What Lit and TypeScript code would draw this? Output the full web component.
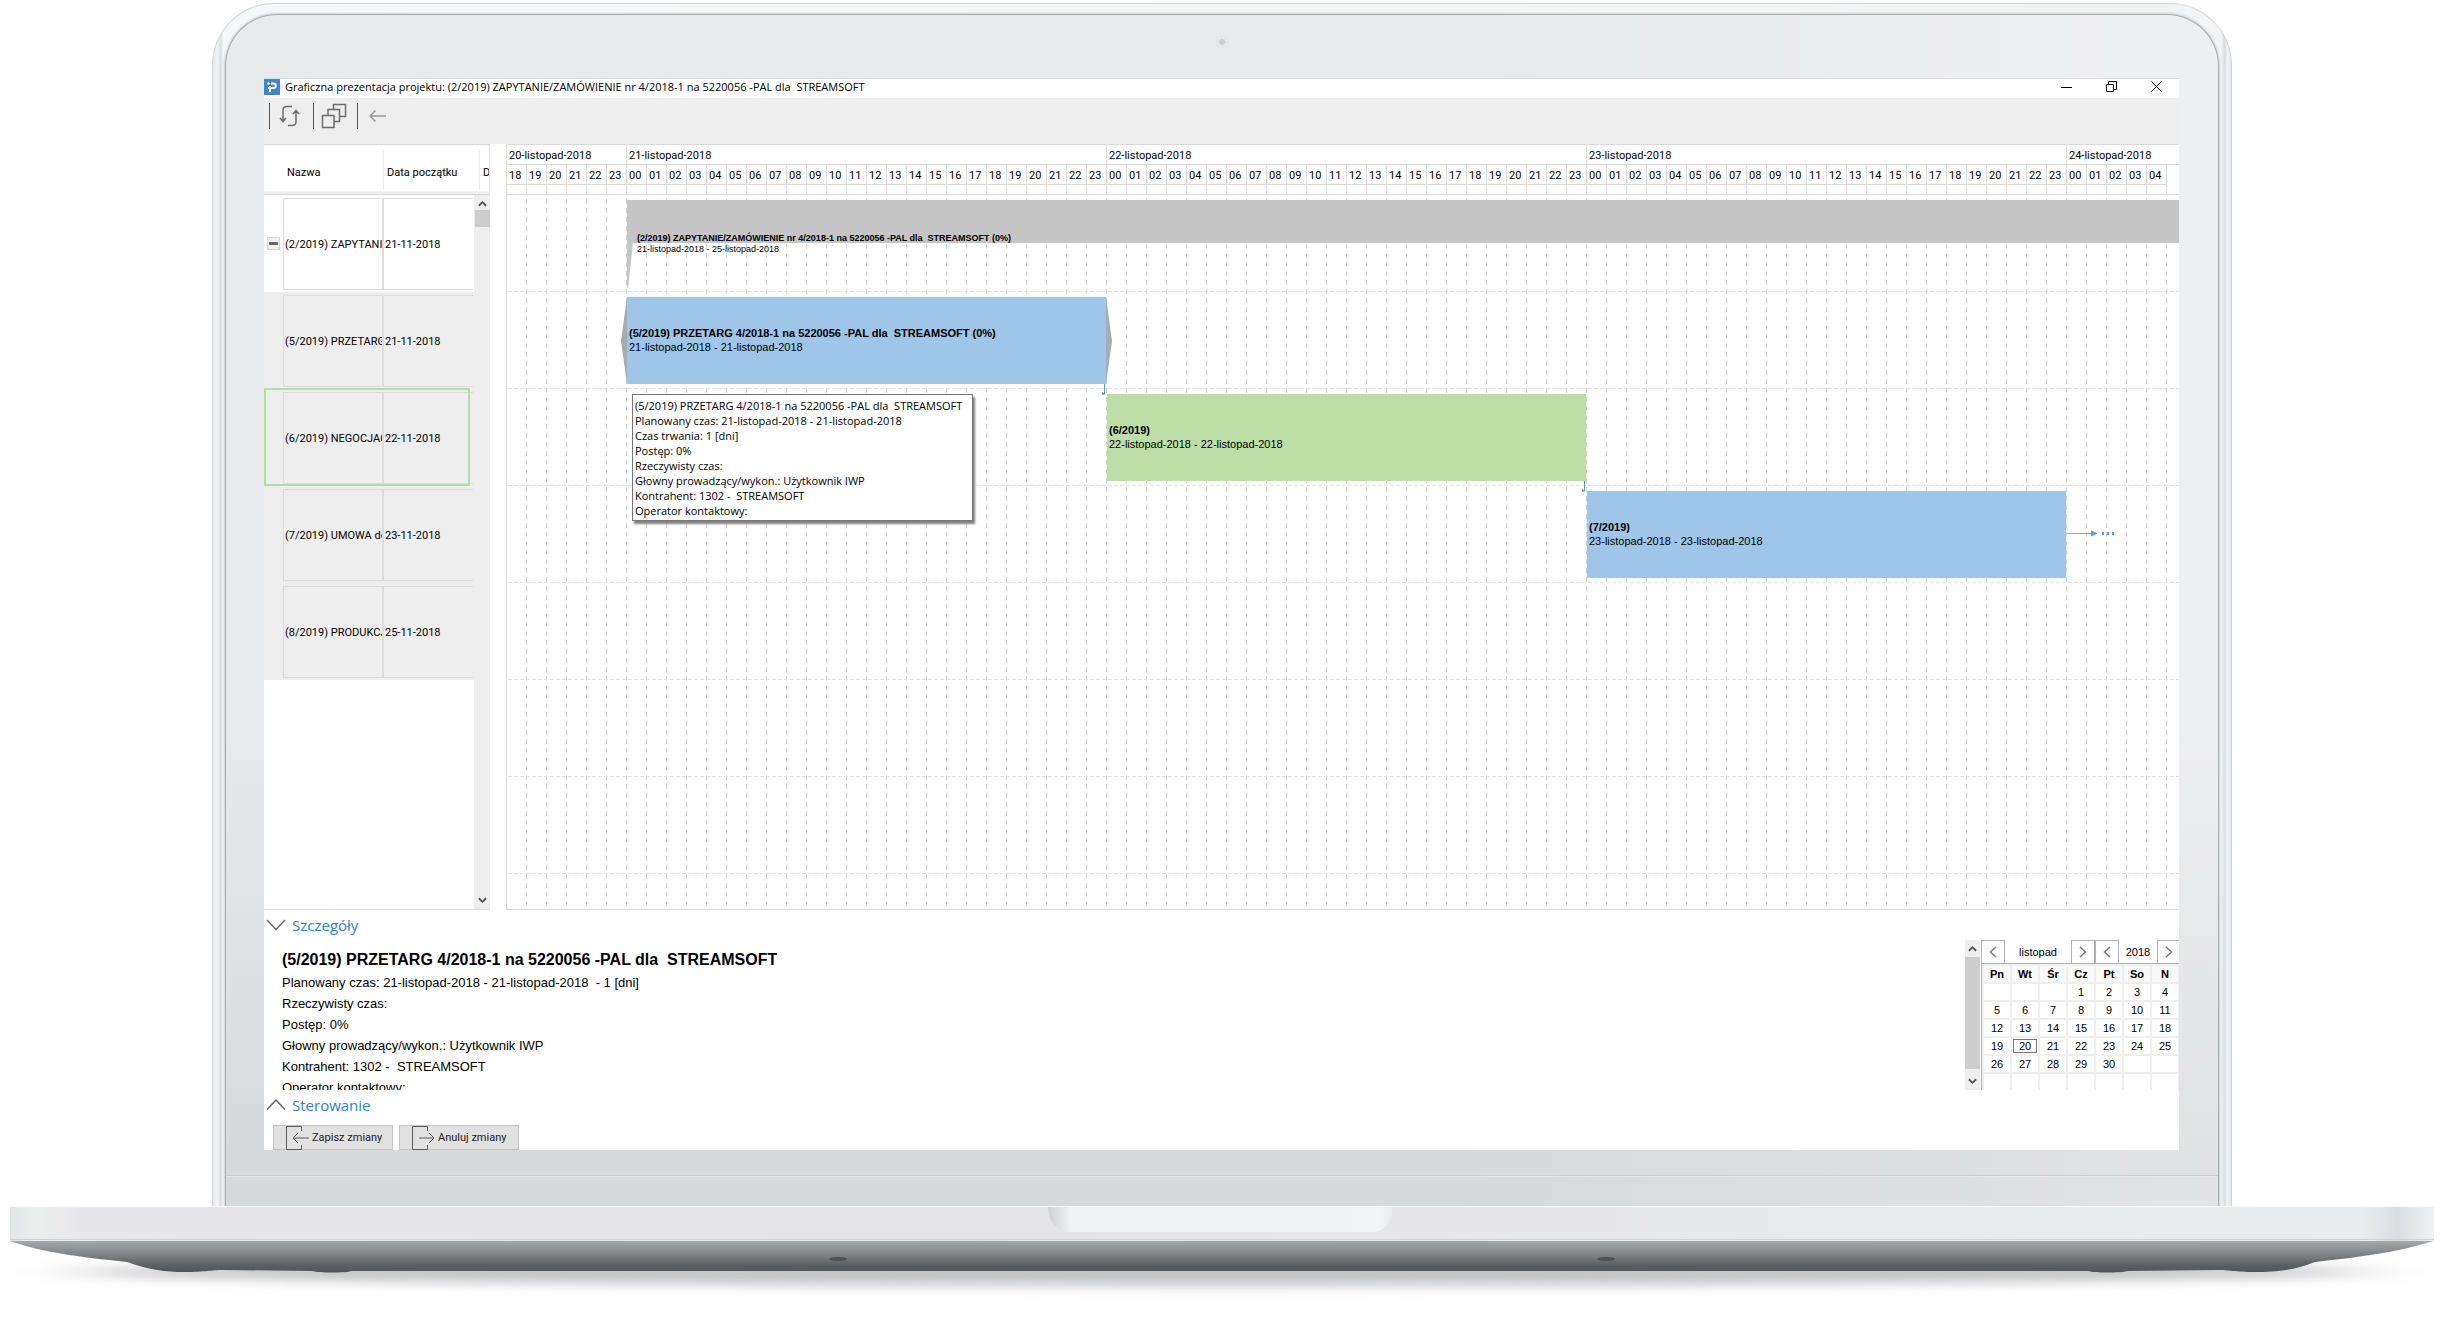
import { LitElement, html, css, svg } from "lit";
import { customElement } from "lit/decorators.js";
import { classMap } from "lit/directives/class-map.js";
import { styleMap } from "lit/directives/style-map.js";

const HOUR = 20;

const chevron = (d: string, size = 10) => html`<svg class="ico" width=${size} height=${size} viewBox="0 0 10 10" aria-hidden="true">
  <path d=${d} fill="none" stroke="currentColor" stroke-width="2" /></svg>`;
const UP = "M1 7.5 L5 3.5 L9 7.5";
const DOWN = "M1 2.5 L5 6.5 L9 2.5";

interface Task {
  id: string;
  name: string;
  date: string;
  kind: "root" | "child" | "selected";
}

const TASKS: Task[] = [
  { id: "2", name: "(2/2019) ZAPYTANIE", date: "21-11-2018", kind: "root" },
  { id: "5", name: "(5/2019) PRZETARG", date: "21-11-2018", kind: "child" },
  { id: "6", name: "(6/2019) NEGOCJAC", date: "22-11-2018", kind: "selected" },
  { id: "7", name: "(7/2019) UMOWA do", date: "23-11-2018", kind: "child" },
  { id: "8", name: "(8/2019) PRODUKCJ", date: "25-11-2018", kind: "child" },
];

@customElement("task-list")
export class TaskList extends LitElement {
  static styles = css`
    :host { display: block; position: relative; background: #fff; border-bottom: 1px solid #d9d9d9; font-family: Roboto, sans-serif; }
    table { width: 100%; border-collapse: collapse; table-layout: fixed; }
    .c0 { width: 19px; }
    .c1 { width: 100px; }
    .c2 { width: 96px; }
    th, td { padding: 0; font-weight: 400; text-align: left; overflow: hidden; }
    .head th { height: 50px; box-sizing: border-box; border-top: 1px solid #d9d9d9; border-bottom: 1px solid #d9d9d9;
      background: linear-gradient(#fff 46px, #eee 46px); }
    .label { display: block; padding: 8px 0 0 3px; height: 38px; line-height: 28px; border-left: 1px solid #e8e8e8; box-sizing: border-box; overflow: hidden; white-space: nowrap; }
    .label.first { border-color: transparent; padding-left: 3px; }
    .row td { height: 97px; }
    .row.shade td { background: #eeeeef; }
    .cell { height: 90px; line-height: 92px; margin: 3px 0 2px; border: 1px solid #dcdcdc; padding-left: 1px; overflow: hidden; box-sizing: content-box; white-space: nowrap; }
    .cell.last { margin-right: 17px; border-right: 0; }
    .fold { display: block; width: 13px; height: 13px; padding: 0; margin-left: 3px; border: 1px solid #d5d5d5; background: #f0f0f0; }
    .fold i { display: block; height: 3px; margin: 0 1px; background: #666; }
    .mark { position: absolute; left: 0; right: 20px; top: 244px; height: 94px; border: 2px solid #b7dc9f; }
    .scroll { position: absolute; top: 51px; right: 0; bottom: 0; width: 16px; background: #eee; color: #505050;
      display: flex; flex-direction: column; align-items: center; padding: 4px 0; box-sizing: border-box; }
    .thumb { width: 15px; height: 17px; background: #cdcdcd; margin: 2px 0 auto; }
    .edge { position: absolute; right: 0; top: 1px; width: 1px; height: 48px; background: #d9d9d9; }
  `;
  render() {
    return html`
      <table>
        <colgroup><col class="c0" /><col class="c1" /><col class="c2" /><col /></colgroup>
        <thead><tr class="head">
          <th></th>
          <th><span class="label first">Nazwa</span></th>
          <th><span class="label">Data początku</span></th>
          <th><span class="label">D</span></th>
        </tr></thead>
        <tbody>
          ${TASKS.map((t) => html`<tr class=${classMap({ row: true, shade: t.kind !== "root" })}>
            <td>${t.kind === "root" ? html`<button class="fold" aria-label="Zwiń"><i></i></button>` : ""}</td>
            <td><div class="cell">${t.name}</div></td>
            <td colspan="2"><div class="cell last">${t.date}</div></td>
          </tr>`)}
        </tbody>
      </table>
      <div class="edge"></div>
      <div class="mark"></div>
      <div class="scroll">${chevron(UP, 9)}<div class="thumb"></div>${chevron(DOWN, 9)}</div>
    `;
  }
}

interface Bar {
  start: number;
  hours: number;
  kind: string;
  title: string;
  range: string;
}

const BARS: Bar[] = [
  { start: 6, hours: 80, kind: "summary", title: "(2/2019) ZAPYTANIE/ZAMÓWIENIE nr 4/2018-1 na 5220056 -PAL dla  STREAMSOFT (0%)", range: "21-listopad-2018 - 25-listopad-2018" },
  { start: 6, hours: 24, kind: "blue open", title: "(5/2019) PRZETARG 4/2018-1 na 5220056 -PAL dla  STREAMSOFT (0%)", range: "21-listopad-2018 - 21-listopad-2018" },
  { start: 30, hours: 24, kind: "green", title: "(6/2019)", range: "22-listopad-2018 - 22-listopad-2018" },
  { start: 54, hours: 24, kind: "blue", title: "(7/2019)", range: "23-listopad-2018 - 23-listopad-2018" },
];

const DAYS = [
  { label: "20-listopad-2018", from: 18, to: 23 },
  { label: "21-listopad-2018", from: 0, to: 23 },
  { label: "22-listopad-2018", from: 0, to: 23 },
  { label: "23-listopad-2018", from: 0, to: 23 },
  { label: "24-listopad-2018", from: 0, to: 4 },
];

@customElement("gantt-chart")
export class GanttChart extends LitElement {
  static styles = css`
    :host { display: block; overflow: hidden; background: #fff; border: solid #d9d9d9; border-width: 1px 0 1px 1px; }
    .scale { display: flex; border-bottom: 1px solid #d9d9d9; font-family: Roboto, sans-serif; }
    .day { flex: none; border-left: 1px solid #d9d9d9; margin-left: -1px; }
    .day:last-child { flex: 1 0 auto; }
    .date { padding-left: 2px; height: 19px; line-height: 21px; border-bottom: 1px solid #d9d9d9; }
    .hours { display: flex; }
    .hour { flex: none; box-sizing: border-box; width: 20px; border-right: 1px solid #d9d9d9; }
    .num { display: block; padding-left: 2px; height: 19px; line-height: 21px; }
    .sub { height: 9px; }
    .line { height: 1px; background: #d9d9d9; }
    .canvas { position: relative; height: 714px; }
    .grid { position: absolute; inset: 0; width: 100%; height: 100%; }
    .row { position: relative; display: flex; height: 97px; padding-top: 5px; box-sizing: border-box; }
    .bar { flex: none; position: relative; box-sizing: border-box; height: 87px; padding: 29px 0 0 2px; line-height: 14px; margin-right: 1px; }
    .name, .range { display: block; white-space: pre; }
    .blue { background: #9fc6e8; }
    .green { background: #bddea7; }
    .summary { height: 43px; padding: 33px 0 0 10px; font-size: 9px; line-height: 11px; background: #c5c5c5; }
    .side { position: absolute; top: 0; width: 6px; height: 87px; }
    .side.l { left: -6px; }
    .side.r { right: -6px; }
    .tail { position: absolute; left: 0; top: 43px; width: 6px; height: 45px; }
    .drop { position: absolute; right: 0; top: 86px; width: 8px; height: 12px; }
    .next { align-self: flex-start; margin-top: 37px; }
    .tip { position: absolute; left: 125px; top: 199px; z-index: 2; box-sizing: border-box; min-width: 341px; padding: 3px 3px 2px 2px;
      background: #fff; border: 1px solid #767676; box-shadow: 2px 3px 2px rgba(0,0,0,.5); font: 11px/15px "Open Sans", "Noto Sans", sans-serif; }
    .tip p { margin: 0; white-space: pre; }
  `;
  render() {
    return html`
      <div class="scale">
        ${DAYS.map((d) => html`<div class="day">
          <div class="date">${d.label}</div>
          <div class="hours">${Array.from({ length: d.to - d.from + 1 }, (_, i) => html`<div class="hour">
            <span class="num">${String(d.from + i).padStart(2, "0")}</span><div class="line"></div><div class="sub"></div></div>`)}</div>
        </div>`)}
      </div>
      <div class="canvas">
        <svg class="grid" aria-hidden="true">
          <defs>
            <pattern id="v" width="20" height="9" patternUnits="userSpaceOnUse"><rect x="19" y="4" width="1" height="5" fill="#d2d2d2" /></pattern>
            <pattern id="h" width="6" height="97" patternUnits="userSpaceOnUse"><rect x="1" y="96" width="4" height="1" fill="#e2e2e2" /></pattern>
          </defs>
          <rect width="100%" height="100%" fill="url(#v)" />
          <rect width="100%" height="100%" fill="url(#h)" />
        </svg>
        ${BARS.map((b, i) => html`<div class="row">
          <div class="bar ${b.kind}" style=${styleMap({ marginLeft: `${b.start * HOUR}px`, width: `${b.hours * HOUR - 1}px` })}>
            <b class="name">${b.title}</b><span class="range">${b.range}</span>
            ${b.kind === "summary" ? html`<svg class="tail" viewBox="0 0 6 45"><path d="M0 0 H6 L1 45 H0 Z" fill="#c5c5c5" /></svg>` : ""}
            ${b.kind === "blue open" ? html`
              <svg class="side l" viewBox="0 0 6 87"><path d="M6 0 L0 44 L6 87 Z" fill="#ababab" /></svg>
              <svg class="side r" viewBox="0 0 6 87"><path d="M0 0 L6 44 L0 87 Z" fill="#ababab" /></svg>` : ""}
            ${i === 1 || i === 2 ? html`<svg class="drop" viewBox="0 0 8 12"><path d="M6.5 1 V11" stroke="#5d93c8" fill="none" /><path d="M4 9 L7.500 11 L4 12 Z" fill="#5d93c8" /></svg>` : ""}
          </div>
          ${i === 3 ? html`<svg class="next" width="50" height="10" viewBox="0 0 50 10"><path d="M0 5.500 H28" stroke="#7fa9cf" /><path d="M24 2.500 L31 5.500 L24 8.500 Z" fill="#6b9bc8" />
            ${[35, 40, 45].map((x) => svg`<rect x=${x} y="4" width="2" height="3" fill="#6b9bc8" />`)}</svg>` : ""}
        </div>`)}
        <div class="tip" role="tooltip">
          <p>(5/2019) PRZETARG 4/2018-1 na 5220056 -PAL dla  STREAMSOFT</p>
          <p>Planowany czas: 21-listopad-2018 - 21-listopad-2018</p>
          <p>Czas trwania: 1 [dni]</p>
          <p>Postęp: 0%</p>
          <p>Rzeczywisty czas:</p>
          <p>Głowny prowadzący/wykon.: Użytkownik IWP</p>
          <p>Kontrahent: 1302 -  STREAMSOFT</p>
          <p>Operator kontaktowy:</p>
        </div>
      </div>
    `;
  }
}

const WEEKDAYS = ["Pn", "Wt", "Śr", "Cz", "Pt", "So", "N"];

@customElement("month-calendar")
export class MonthCalendar extends LitElement {
  static styles = css`
    :host { display: flex; width: 214px; height: 150px; overflow: hidden; }
    .scroll { flex: none; width: 15px; margin-right: 1px; background: #eee; color: #505050; display: flex; flex-direction: column; align-items: center; padding: 4px 0; box-sizing: border-box; }
    .thumb { flex: 1; width: 15px; background: #cdcdcd; margin: 4px 0 8px; }
    .cal { flex: none; width: 200px; border-left: 1px solid #b0b0b0; border-bottom: 1px solid #b0b0b0; box-sizing: border-box; }
    .nav { display: flex; height: 23px; line-height: 24px; text-align: center; border-bottom: 1px solid #b0b0b0; }
    .nav button { flex: none; width: 24px; height: 24px; padding: 0; border: 1px solid #b0b0b0; background: #fff; color: #777; display: grid; place-items: center; }
    .nav button:first-child { border-left: 0; width: 23px; }
    .month { flex: none; width: 66px; }
    .year { flex: none; width: 38px; }
    table { border-collapse: separate; border-spacing: 2px; background: #efefef; width: 198px; table-layout: fixed; }
    th, td { padding: 0; height: 16px; line-height: 16px; text-align: center; background: #fff; }
    th { background: #f9f9f9; font-weight: 700; }
    .today { display: block; margin: 0 1px; height: 14px; line-height: 12px; box-sizing: border-box; border: 1px solid #777; }
  `;
  render() {
    const cells = Array.from({ length: 42 }, (_, i) => (i >= 3 && i < 33 ? i - 2 : 0));
    const prev = html`<svg width="8" height="12" viewBox="0 0 8 12"><path d="M7 1 L1.500 6 L7 11" fill="none" stroke="currentColor" stroke-width="1.500" /></svg>`;
    const next = html`<svg width="8" height="12" viewBox="0 0 8 12"><path d="M1 1 L6.500 6 L1 11" fill="none" stroke="currentColor" stroke-width="1.500" /></svg>`;
    return html`
      <div class="scroll">${chevron(UP, 9)}<div class="thumb"></div>${chevron(DOWN, 9)}</div>
      <div class="cal">
        <div class="nav">
          <button aria-label="Poprzedni miesiąc">${prev}</button>
          <span class="month">listopad</span>
          <button aria-label="Następny miesiąc">${next}</button>
          <button aria-label="Poprzedni rok">${prev}</button>
          <span class="year">2018</span>
          <button aria-label="Następny rok">${next}</button>
        </div>
        <table>
          <thead><tr>${WEEKDAYS.map((d) => html`<th>${d}</th>`)}</tr></thead>
          <tbody>${[0, 1, 2, 3, 4, 5].map((r) => html`<tr>${cells.slice(r * 7, r * 7 + 7).map((n) => html`<td>${n === 20 ? html`<span class="today">20</span>` : n || ""}</td>`)}</tr>`)}</tbody>
        </table>
      </div>
    `;
  }
}

@customElement("app-root")
export class AppRoot extends LitElement {
  static styles = css`
    :host { display: block; background: #fff; overflow: hidden; color: #000; font: 11px/14px "Liberation Sans", Arial, sans-serif; }
    .lid { margin: 3px 218px 0 212px; border-radius: 62px 62px 0 0; padding: 10px 12px 0; border: 1px solid #d4d5d6; border-bottom: 0; box-sizing: border-box;
      background: linear-gradient(90deg, #e4e5e6, #f4f5f6 4px, #dcdddf 8px, #f6f7f8 10px, #f2f3f4 calc(100% - 10px), #d9dadc calc(100% - 6px), #f4f5f6 calc(100% - 4px), #e4e5e6); }
    .bezel { border: 1px solid #a9abad; border-bottom: 0; border-radius: 52px 52px 0 0; padding: 9px 39px 0 38px;
      background: linear-gradient(90deg, rgba(255,255,255,0) 60%, rgba(255,255,255,.25)), linear-gradient(#e9eaec 60%, #d8d9db 95%); box-shadow: 0 0 2px 1px #d0d1d3; }
    .camera { display: block; width: 12px; height: 12px; margin: 12px auto 30px; border-radius: 50%; background: radial-gradient(#cfd0d2 30%, #e1e2e4 35%, #e8e9eb 60%, #dfe0e2 70%, #ebecee); }
    .screen { background: #fff; border-top: 1px solid #d9dadb; overflow: hidden; }
    .chin { height: 56px; padding-top: 25px; box-sizing: border-box; margin: 0 -39px 0 -38px; }
    .chin i { display: block; height: 1px; background: #cbccce; border-bottom: 1px solid #e6e7e8; }
    .base { display: block; width: 100%; height: 127px; }

    .titlebar { display: flex; height: 19px; }
    .logo { flex: none; width: 16px; height: 16px; margin-right: 5px; }
    .title { flex: 1; margin: 0; font: 400 11px/16px "Open Sans", "Noto Sans", sans-serif; white-space: pre; }
    .win { flex: none; width: 45px; height: 15px; border: 0; padding: 0; background: none; display: grid; place-items: center; }
    .tools { display: flex; align-items: flex-start; height: 46px; padding: 5px 0 0 5px; box-sizing: border-box; background: #eeeeef; }
    .sep { width: 1px; height: 26px; background: #555; }
    .tool { width: 43px; height: 26px; padding: 0 4px 0 0; border: 0; background: none; display: grid; place-items: center; }
    .work { display: flex; }
    .list { flex: none; width: 226px; margin-right: 16px; }
    .chart { flex: 1; min-width: 0; }
    .section { display: flex; align-items: center; gap: 6px; height: 30px; padding: 0 0 0 2px; border: 0; background: none; color: #2f82cc; font: 15px/30px "Open Sans", "Noto Sans", sans-serif; }
    .details { display: flex; height: 150px; justify-content: space-between; }
    .facts { padding: 8px 0 0 18px; font-size: 13px; line-height: 21px; height: 150px; box-sizing: border-box; overflow: hidden; }
    .facts h2 { margin: 0; font-size: 16px; line-height: 24px; white-space: pre; }
    .facts p { margin: 0; white-space: pre; }
    .actions { display: flex; gap: 6px; height: 30px; padding: 5px 0 0 9px; box-sizing: border-box; overflow: hidden; }
    .action { display: flex; align-items: center; gap: 3px; width: 120px; height: 25px; box-sizing: border-box; padding: 0 0 0 11px; border: 1px solid #c3c3c3; background: #e1e1e2; color: #222; font: 11px/14px Roboto, sans-serif; }
  `;

  render() {
    return html`
      <div class="lid"><div class="bezel">
        <span class="camera"></span>
        <main class="screen">
          <header class="titlebar">
            <svg class="logo" viewBox="0 0 16 16" aria-hidden="true"><rect width="16" height="16" fill="#3f86d0" />
              <path d="M7 4.500 H9.500 A2.200 2.200 0 0 1 9.500 9 H4 M6 7 V13" fill="none" stroke="#fff" stroke-width="2" /><circle cx="4.500" cy="4.500" r="1.200" fill="#fff" /></svg>
            <h1 class="title">Graficzna prezentacja projektu: (2/2019) ZAPYTANIE/ZAMÓWIENIE nr 4/2018-1 na 5220056 -PAL dla  STREAMSOFT</h1>
            <button class="win" aria-label="Minimalizuj"><svg width="11" height="11" viewBox="0 0 11 11"><path d="M0 6.500 H11" stroke="#000" /></svg></button>
            <button class="win" aria-label="Przywróć"><svg width="11" height="11" viewBox="0 0 11 11"><path d="M.5 3.500 H7.500 V10.500 H.5 Z M2.500 3.500 V.5 H10.500 V8.500 H7.500" fill="none" stroke="#000" /></svg></button>
            <button class="win" aria-label="Zamknij"><svg width="11" height="11" viewBox="0 0 11 11"><path d="M.5 .5 L10.500 10.500 M10.500 .5 L.5 10.500" stroke="#000" /></svg></button>
          </header>
          <nav class="tools">
            <span class="sep"></span>
            <button class="tool" aria-label="Odśwież"><svg width="22" height="22" viewBox="0 0 22 22" fill="none" stroke="#6d6d6d" stroke-width="1.500">
              <path d="M13 1.500 H8 Q4 1.500 4 5 V16 M1 13 L4 16.500 L7 13" /><path d="M9 20.500 H13 Q17 20.500 17 17 V5.500 M14 9 L17 5.500 L20 9" /></svg></button>
            <span class="sep"></span>
            <button class="tool" aria-label="Kopiuj"><svg width="26" height="26" viewBox="0 0 26 26" fill="none" stroke="#6d6d6d" stroke-width="1.500">
              <path d="M1.500 12.500 H13 V24.500 H1.500 Z M7 12 V6.500 H18.500 V18.500 H13.500 M12.500 6 V1.500 H24.500 V13.500 H19" /></svg></button>
            <span class="sep"></span>
            <button class="tool" aria-label="Wstecz"><svg width="17" height="12" viewBox="0 0 17 12" fill="none" stroke="#999" stroke-width="1.500"><path d="M17 6 H1 M6.500 .5 L1 6 L6.500 11.500" /></svg></button>
          </nav>
          <div class="work">
            <task-list class="list"></task-list>
            <gantt-chart class="chart"></gantt-chart>
          </div>
          <button class="section" aria-expanded="true"><svg width="20" height="12" viewBox="0 0 20 12"><path d="M1 1 L10 10.500 L19 1" fill="none" stroke="#666" stroke-width="1.500" /></svg>Szczegóły</button>
          <section class="details">
            <div class="facts">
              <h2>(5/2019) PRZETARG 4/2018-1 na 5220056 -PAL dla  STREAMSOFT</h2>
              <p>Planowany czas: 21-listopad-2018 - 21-listopad-2018  - 1 [dni]</p>
              <p>Rzeczywisty czas:</p>
              <p>Postęp: 0%</p>
              <p>Głowny prowadzący/wykon.: Użytkownik IWP</p>
              <p>Kontrahent: 1302 -  STREAMSOFT</p>
              <p>Operator kontaktowy:</p>
            </div>
            <month-calendar></month-calendar>
          </section>
          <button class="section" aria-expanded="true"><svg width="20" height="12" viewBox="0 0 20 12"><path d="M1 10.500 L10 1 L19 10.500" fill="none" stroke="#666" stroke-width="1.500" /></svg>Sterowanie</button>
          <div class="actions">
            <button class="action"><svg width="24" height="24" viewBox="0 0 24 24" fill="none" stroke="#5c5c5c"><path d="M16.500 5 V.5 H1.500 V23.500 H16.500 V19" /><path d="M24 12 H8 M13 7 L8 12 L13 17" /></svg>Zapisz zmiany</button>
            <button class="action"><svg width="24" height="24" viewBox="0 0 24 24" fill="none" stroke="#5c5c5c"><path d="M16.500 5 V.5 H1.500 V23.500 H16.500 V19" /><path d="M8 12 H23 M18 7 L23 12 L18 17" /></svg>Anuluj zmiany</button>
          </div>
        </main>
        <div class="chin"><i></i></div>
      </div></div>
      <svg class="base" viewBox="0 0 2450 127" preserveAspectRatio="none" aria-hidden="true">
        <defs>
          <linearGradient id="deck"><stop offset="0" stop-color="#e3e4e5" /><stop offset=".01" stop-color="#edeeee" /><stop offset=".03" stop-color="#e7e7e9" /><stop offset=".4" stop-color="#e4e4e6" /><stop offset=".97" stop-color="#ebecee" /><stop offset=".985" stop-color="#dcdde0" /><stop offset="1" stop-color="#f0f1f2" /></linearGradient>
          <linearGradient id="belly" x2="0" y2="1"><stop offset="0" stop-color="#a6a7a8" /><stop offset=".4" stop-color="#85868a" /><stop offset=".75" stop-color="#5f6064" /><stop offset="1" stop-color="#525356" /></linearGradient>
          <linearGradient id="notch"><stop offset="0" stop-color="#cfd0d2" /><stop offset=".07" stop-color="#f2f3f5" /><stop offset=".95" stop-color="#f4f5f7" /><stop offset="1" stop-color="#e9eaec" /></linearGradient>
          <filter id="soft" x="-5%" y="-100%" width="110%" height="300%"><feGaussianBlur stdDeviation="40 6" /></filter>
        </defs>
        <ellipse cx="1222" cy="66" rx="1150" ry="14" fill="#c4c5c8" filter="url(#soft)" />
        <path d="M10 35 C40 46 80 51 127 56 C150 64 165 66 185 66 C205 66 212 64 222 64 L312 65 C320 67 345 67 352 65 H2088 C2095 67 2120 67 2128 65 L2218 64 C2228 64 2235 66 2255 66 C2278 66 2295 64 2315 56 C2360 51 2400 46 2433 35 Z" fill="url(#belly)" />
        <rect x="10" width="2424" height="35" fill="url(#deck)" />
        <rect x="10" width="2424" height="1" fill="#fafafa" />
        <rect x="10" y="33" width="2424" height="1" fill="#d2d3d5" />
        <path d="M1048 1 H1393 C1392 16 1385 26 1372 26 H1072 C1056 26 1049 16 1048 1 Z" fill="url(#notch)" />
        <ellipse cx="838" cy="53" rx="9" ry="2" fill="#505155" /><ellipse cx="1606" cy="53" rx="9" ry="2" fill="#505155" />
      </svg>
    `;
  }
}
